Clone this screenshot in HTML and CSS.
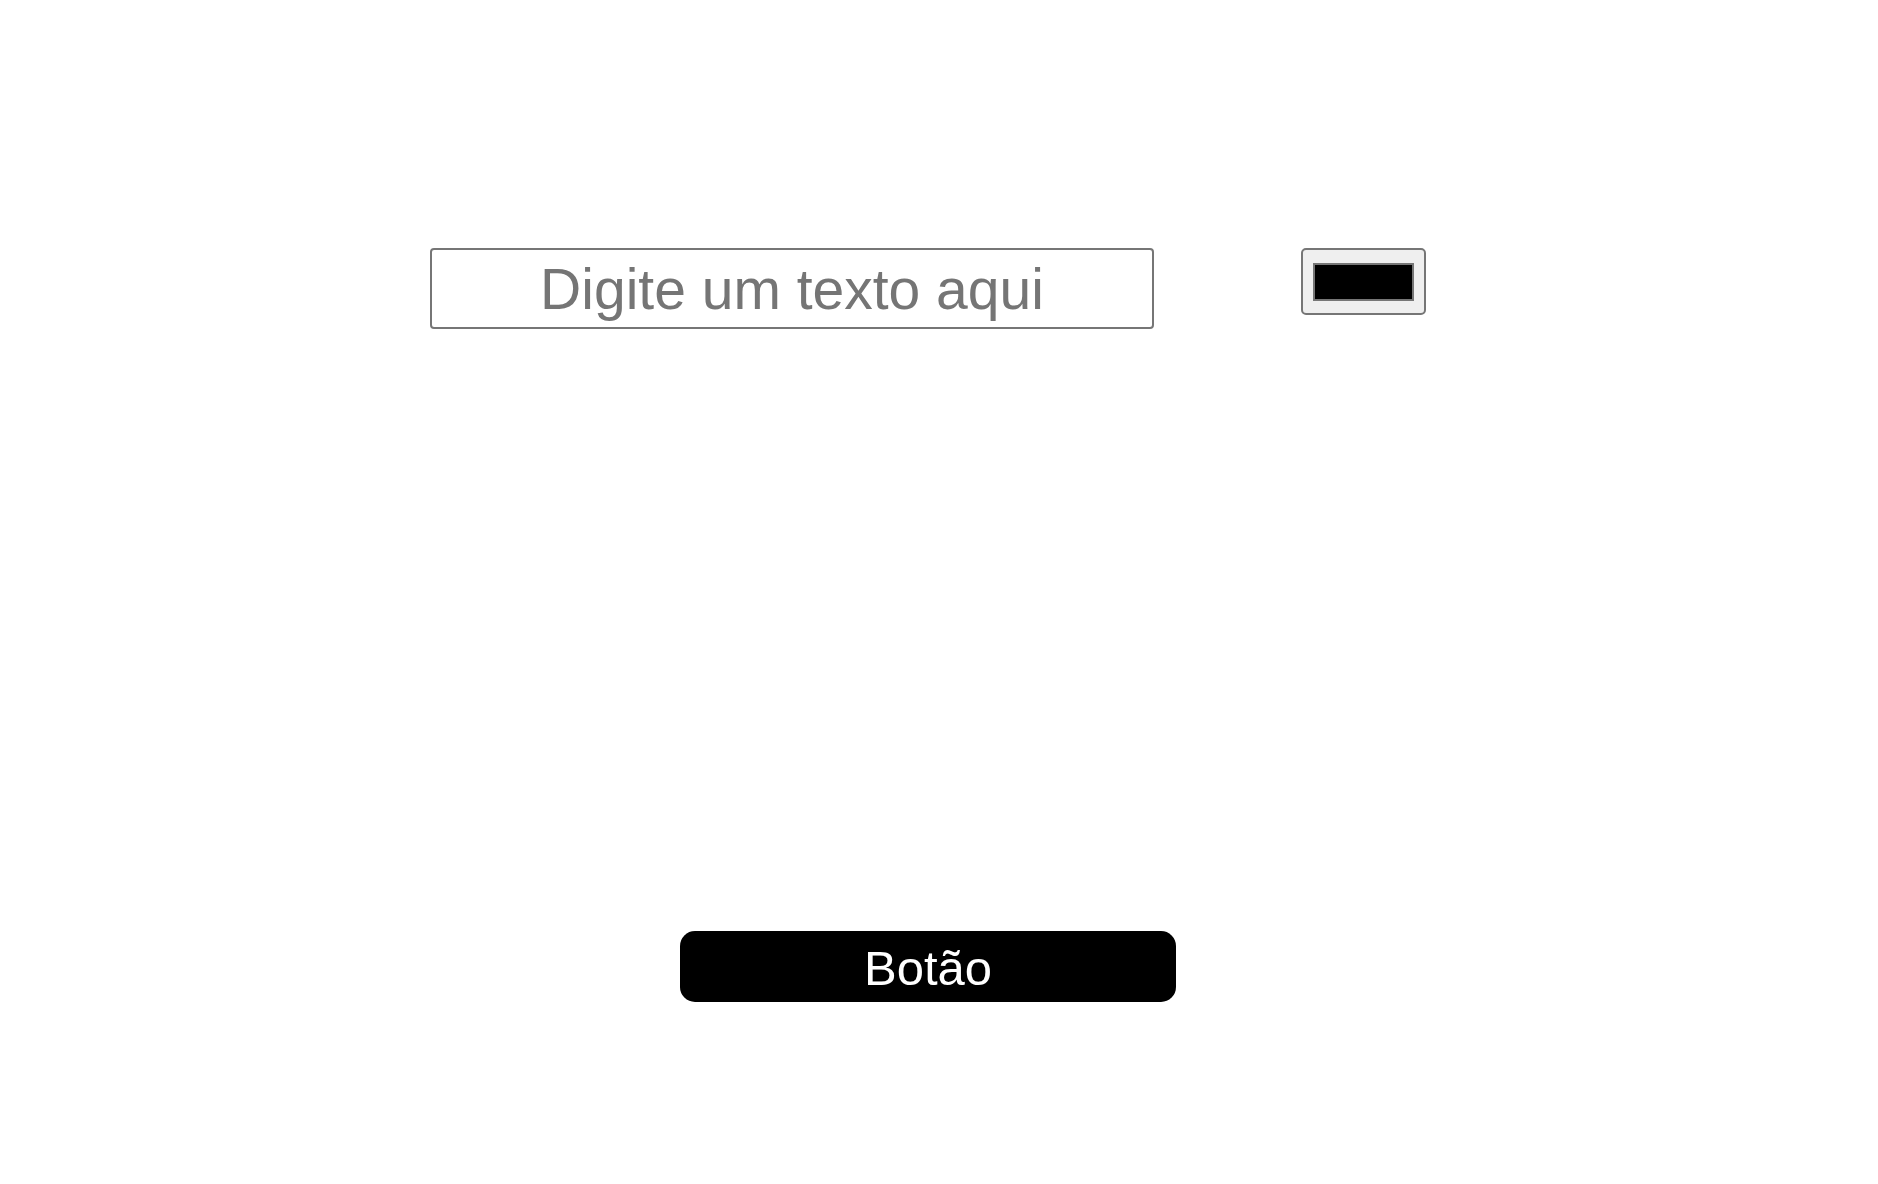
FILE: index.html
```html
<!DOCTYPE html>
<html lang="pt">
<head>
<meta charset="utf-8">
<title>Formulário</title>
<link rel="stylesheet" href="styles.css">
</head>
<body>
<main class="page">
  <div class="top-row">
    <input class="text-field" type="text" placeholder="Digite um texto aqui">
    <button class="color-picker" type="button" aria-label="Cor"><span class="swatch"></span></button>
  </div>
  <button class="action" type="button">Botão</button>
</main>
</body>
</html>
```
FILE: styles.css
```css
html, body {
  margin: 0;
  padding: 0;
  background: #ffffff;
}
body {
  font-family: "Liberation Sans", Arial, sans-serif;
}
.page {
  display: flex;
  flex-direction: column;
  align-items: flex-start;
  padding-top: 248px;
}
.top-row {
  display: flex;
  align-items: flex-start;
  gap: 147px;
  margin-left: 430px;
}
.text-field {
  box-sizing: border-box;
  width: 724px;
  height: 81px;
  margin: 0;
  padding: 0 4px;
  border: 2px solid #767676;
  border-radius: 4px;
  background: #ffffff;
  font-family: "Liberation Sans", Arial, sans-serif;
  font-size: 57px;
  color: #000000;
  text-align: center;
  outline: none;
}
.text-field::placeholder {
  color: #757575;
  opacity: 1;
}
.color-picker {
  box-sizing: border-box;
  width: 125px;
  height: 67px;
  margin: 0;
  padding: 13px 10px 12px 10px;
  border: 2px solid #767676;
  border-radius: 5px;
  background: #efefef;
  display: flex;
}
.swatch {
  box-sizing: border-box;
  display: block;
  width: 101px;
  height: 38px;
  border: 2px solid #767676;
  background: #000000;
}
.action {
  box-sizing: border-box;
  width: 496px;
  height: 71px;
  margin: 602px 0 0 680px;
  padding: 4px 0 0 0;
  border: none;
  border-radius: 15px;
  background: #000000;
  color: #ffffff;
  font-family: "Liberation Sans", Arial, sans-serif;
  font-size: 49px;
  line-height: 1;
  text-align: center;
}
```
